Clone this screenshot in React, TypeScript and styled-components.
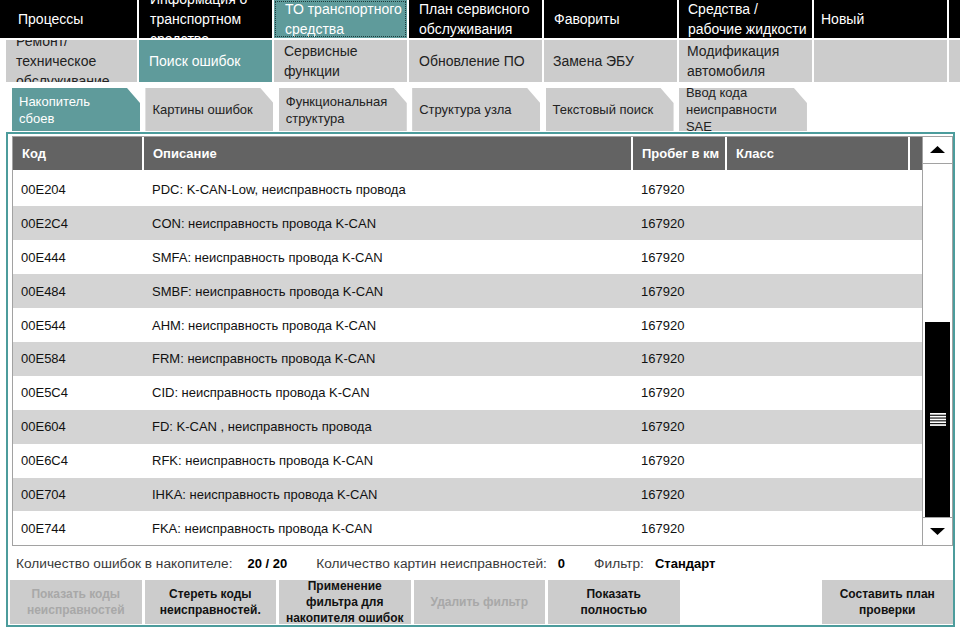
import React from "react";
import styled, { createGlobalStyle } from "styled-components";

const TEAL = "#5f9b9b";
const PANEL_TEAL = "#4c9c9c";
const GREY = "#cccccc";
const ROW_GREY = "#d4d4d4";
const HEAD = "#636363";
const LINE = "#a2a2a2";

const GlobalStyle = createGlobalStyle`
  html, body { margin: 0; padding: 0; background: #fff; }
  body {
    font-family: "Liberation Sans", Arial, sans-serif;
    width: 960px;
    height: 631px;
    overflow: hidden;
  }
  * { box-sizing: border-box; }
`;

const Page = styled.div`
  width: 960px;
  height: 631px;
  display: flex;
  flex-direction: column;
  overflow: hidden;
  background: #fff;
`;

/* ---------- top navigation ---------- */
const NavRow = styled.div<{ $sub?: boolean }>`
  display: flex;
  gap: 2px;
  height: ${(p) => (p.$sub ? "42px" : "38px")};
  margin-top: ${(p) => (p.$sub ? "2px" : "0")};
  padding-left: ${(p) => (p.$sub ? "6px" : "0")};
`;

const NavCell = styled.div<{ $w?: number; $active?: boolean; $sub?: boolean; $focus?: boolean; $pl?: number }>`
  flex: ${(p) => (p.$w ? `0 0 ${p.$w}px` : "1 1 auto")};
  display: flex;
  align-items: center;
  overflow: hidden;
  padding: 0 1px 0 ${(p) => p.$pl ?? 10}px;
  font-size: 14px;
  line-height: 20px;
  background: ${(p) => (p.$active ? TEAL : p.$sub ? GREY : "#000")};
  color: ${(p) => (p.$active || !p.$sub ? "#fff" : "#222")};
  outline: ${(p) => (p.$focus ? "1px dotted #1f3b3b" : "none")};
  outline-offset: -2px;
`;

const NavText = styled.span`
  display: block;
`;

/* ---------- tabs ---------- */
const TabRow = styled.div`
  display: flex;
  gap: 5.4px;
  height: 43px;
  margin-top: 6px;
  padding-left: 12px;
`;

const Tab = styled.div<{ $active?: boolean }>`
  flex: 0 0 128px;
  display: flex;
  align-items: center;
  overflow: hidden;
  padding: 0 14px 0 7px;
  font-size: 13px;
  line-height: 17px;
  background: ${(p) => (p.$active ? TEAL : GREY)};
  color: ${(p) => (p.$active ? "#fff" : "#222")};
  clip-path: polygon(0 0, calc(100% - 13px) 0, 100% 15px, 100% 100%, 0 100%);
`;

/* ---------- main panel ---------- */
const Panel = styled.div`
  margin: 1px 5px 0 6px;
  border: 2px solid ${PANEL_TEAL};
  padding: 2px 0 1px 4px;
  display: flex;
  flex-direction: column;
`;

const Frame = styled.div`
  height: 410px;
  border: 1px solid ${LINE};
  display: flex;
  overflow: hidden;
`;

const TableArea = styled.div`
  flex: 0 0 909px;
  display: flex;
  flex-direction: column;
  overflow: hidden;
`;

const COLS = "129px 487px 92px 181px 12px";

const HeaderRow = styled.div`
  flex: 0 0 33px;
  display: grid;
  grid-template-columns: ${COLS};
  gap: 2px;
  margin-bottom: 2.5px;
  background: #fff;
`;

const HeadCell = styled.div`
  background: ${HEAD};
  color: #fff;
  font-weight: bold;
  font-size: 13px;
  display: flex;
  align-items: center;
  padding-left: 9px;
  white-space: nowrap;
  overflow: hidden;
`;

const Row = styled.div<{ $alt?: boolean }>`
  flex: 0 0 33.9px;
  display: grid;
  grid-template-columns: ${COLS};
  gap: 2px;
  align-items: center;
  background: ${(p) => (p.$alt ? ROW_GREY : "#fff")};
  font-size: 13px;
  color: #111;
`;

const Cell = styled.div`
  padding-left: 8px;
  white-space: nowrap;
  overflow: hidden;
`;

/* ---------- scrollbar ---------- */
const ScrollBar = styled.div`
  flex: 0 0 30px;
  display: flex;
  flex-direction: column;
  border-left: 1px solid ${LINE};
  background: #fff;
`;

const ScrollBtn = styled.div<{ $down?: boolean }>`
  flex: 0 0 ${(p) => (p.$down ? "28px" : "27px")};
  display: flex;
  align-items: center;
  justify-content: center;
  border-${(p) => (p.$down ? "top" : "bottom")}: 1px solid ${LINE};
  background: #fff;
`;

const Track = styled.div`
  flex: 1;
  display: flex;
  flex-direction: column;
  justify-content: flex-end;
  padding: 0 2px;
`;

const Thumb = styled.div`
  flex: 0 0 195px;
  background: #000;
  display: flex;
  align-items: center;
  justify-content: center;
`;

/* ---------- footer ---------- */
const Status = styled.div`
  height: 34px;
  display: flex;
  align-items: center;
  padding: 1px 0 0 4px;
  white-space: nowrap;
`;

const Label = styled.span`
  color: #3a3a3a;
  font-size: 13.7px;
`;

const Value = styled.span<{ $gap: number; $last?: boolean }>`
  color: #000;
  font-weight: bold;
  font-size: 13px;
  margin-left: ${(p) => p.$gap}px;
  margin-right: ${(p) => (p.$last ? "0" : "29px")};
`;

const ButtonRow = styled.div`
  height: 44px;
  margin-left: -2px;
  display: flex;
  gap: 3px;
`;

const Button = styled.div<{ $disabled?: boolean; $push?: boolean }>`
  flex: 0 0 131.5px;
  margin-left: ${(p) => (p.$push ? "auto" : "0")};
  background: ${GREY};
  display: flex;
  flex-direction: column;
  align-items: center;
  justify-content: center;
  text-align: center;
  overflow: hidden;
  padding: 0 4px;
  font-size: 12px;
  font-weight: bold;
  line-height: 16px;
  color: ${(p) => (p.$disabled ? "#a8a8a8" : "#111")};
`;

const BtnLine = styled.span`
  display: block;
  white-space: nowrap;
  flex: 0 0 auto;
`;

/* ---------- data ---------- */
const topNav = [
  { t: "Процессы", w: 137, pl: 18 },
  { t: "Информация о транспортном средстве", w: 133, pl: 11 },
  { t: "ТО транспортного средства", w: 133, pl: 11, active: true, focus: true },
  { t: "План сервисного обслуживания", w: 133, pl: 10 },
  { t: "Фавориты", w: 133, pl: 10 },
  { t: "Средства / рабочие жидкости", w: 133, pl: 9 },
  { t: "Новый", w: 133, pl: 7 },
  { t: "", w: 0, pl: 0 },
];

const subNav = [
  { t: "Ремонт/ техническое обслуживание", w: 131, pl: 10 },
  { t: "Поиск ошибок", w: 133, pl: 10, active: true },
  { t: "Сервисные функции", w: 133, pl: 10 },
  { t: "Обновление ПО", w: 133, pl: 10 },
  { t: "Замена ЭБУ", w: 133, pl: 9 },
  { t: "Модификация автомобиля", w: 133, pl: 8 },
  { t: "", w: 133, pl: 8 },
  { t: "", w: 0, pl: 0 },
];

const tabs = [
  { t: "Накопитель сбоев", active: true },
  { t: "Картины ошибок" },
  { t: "Функциональная структура" },
  { t: "Структура узла" },
  { t: "Текстовый поиск" },
  { t: "Ввод кода неисправности SAE" },
];

const rows = [
  ["00E204", "PDC: K-CAN-Low, неисправность провода"],
  ["00E2C4", "CON: неисправность провода K-CAN"],
  ["00E444", "SMFA: неисправность провода K-CAN"],
  ["00E484", "SMBF: неисправность провода K-CAN"],
  ["00E544", "AHM: неисправность провода K-CAN"],
  ["00E584", "FRM: неисправность провода K-CAN"],
  ["00E5C4", "CID: неисправность провода K-CAN"],
  ["00E604", "FD: K-CAN , неисправность провода"],
  ["00E6C4", "RFK: неисправность провода K-CAN"],
  ["00E704", "IHKA: неисправность провода K-CAN"],
  ["00E744", "FKA: неисправность провода K-CAN"],
];

const buttons: { lines: string[]; disabled?: boolean; push?: boolean }[] = [
  { lines: ["Показать коды", "неисправностей"], disabled: true },
  { lines: ["Стереть коды", "неисправностей."] },
  { lines: ["Применение", "фильтра для", "накопителя ошибок"] },
  { lines: ["Удалить фильтр"], disabled: true },
  { lines: ["Показать", "полностью"] },
  { lines: ["Составить план", "проверки"], push: true },
];

const Arrow = ({ down }: { down?: boolean }) => (
  <svg width="15" height="8" viewBox="0 0 15 8">
    <polygon points={down ? "0,0 15,0 7.5,7" : "0,7 15,7 7.5,0"} fill="#000" />
  </svg>
);

const Grip = () => (
  <svg width="16" height="13" viewBox="0 0 16 13">
    {[0, 2.8, 5.6, 8.4, 11.2].map((y) => (
      <rect key={y} x="0" y={y} width="16" height="1.7" fill="#fff" />
    ))}
  </svg>
);

export default function App() {
  return (
    <Page>
      <GlobalStyle />
      <NavRow>
        {topNav.map((n, i) => (
          <NavCell key={i} $w={n.w || undefined} $pl={n.pl} $active={n.active} $focus={n.focus}>
            <NavText>{n.t}</NavText>
          </NavCell>
        ))}
      </NavRow>
      <NavRow $sub>
        {subNav.map((n, i) => (
          <NavCell key={i} $sub $w={n.w || undefined} $pl={n.pl} $active={n.active}>
            <NavText>{n.t}</NavText>
          </NavCell>
        ))}
      </NavRow>
      <TabRow>
        {tabs.map((t, i) => (
          <Tab key={i} $active={t.active}>
            <NavText>{t.t}</NavText>
          </Tab>
        ))}
      </TabRow>
      <Panel>
        <Frame>
          <TableArea>
            <HeaderRow>
              <HeadCell>Код</HeadCell>
              <HeadCell>Описание</HeadCell>
              <HeadCell>Пробег в км</HeadCell>
              <HeadCell>Класс</HeadCell>
              <HeadCell />
            </HeaderRow>
            {rows.map((r, i) => (
              <Row key={r[0]} $alt={i % 2 === 1}>
                <Cell>{r[0]}</Cell>
                <Cell>{r[1]}</Cell>
                <Cell>167920</Cell>
                <Cell />
                <Cell />
              </Row>
            ))}
          </TableArea>
          <ScrollBar>
            <ScrollBtn>
              <Arrow />
            </ScrollBtn>
            <Track>
              <Thumb>
                <Grip />
              </Thumb>
            </Track>
            <ScrollBtn $down>
              <Arrow down />
            </ScrollBtn>
          </ScrollBar>
        </Frame>
        <Status>
          <Label>Количество ошибок в накопителе:</Label>
          <Value $gap={15}>20 / 20</Value>
          <Label>Количество картин неисправностей:</Label>
          <Value $gap={11}>0</Value>
          <Label>Фильтр:</Label>
          <Value $gap={11} $last>
            Стандарт
          </Value>
        </Status>
        <ButtonRow>
          {buttons.map((b, i) => (
            <Button key={i} $disabled={b.disabled} $push={b.push}>
              {b.lines.map((l) => (
                <BtnLine key={l}>{l}</BtnLine>
              ))}
            </Button>
          ))}
        </ButtonRow>
      </Panel>
    </Page>
  );
}
